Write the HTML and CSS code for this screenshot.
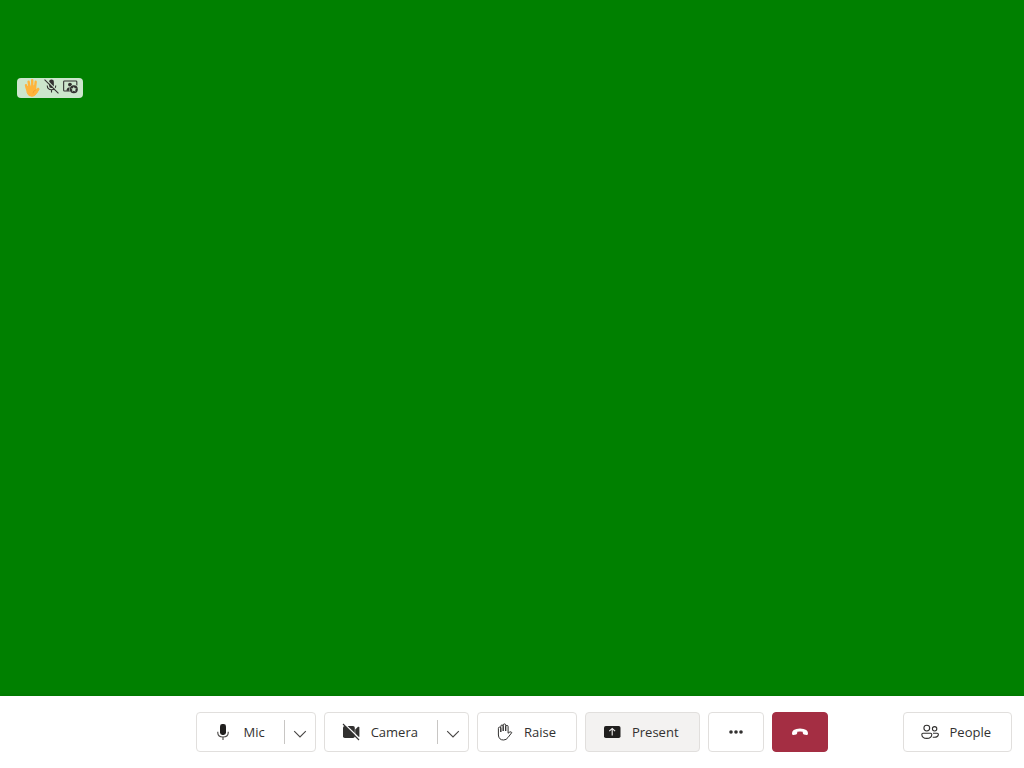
FILE: index.html
```html
<!DOCTYPE html>
<html lang="en">
<head>
<meta charset="utf-8">
<meta name="viewport" content="width=device-width, initial-scale=1">
<title>Call</title>
<link rel="stylesheet" href="styles.css">
</head>
<body>
<div class="call">
  <main class="stage">
    <div class="status" role="group" aria-label="Participant status">
      <svg class="status-hand" viewBox="0 0 16 20" role="img" aria-label="Hand raised">
        <g stroke-linecap="round" stroke-linejoin="round">
          <path d="M3 11 2 7.2M5.6 9.5 4.6 3.6M8.3 9.5 8.2 2.3M11 10 11.7 3.8" fill="none" stroke="#ffb43c" stroke-width="2.4"/>
          <path d="M2.2 9 3.2 14.8Q4.2 18.3 8 18.3Q10.8 18.3 12.6 15.4L15 11.4Q15.2 9.8 13.8 10.2L12 11.8 11.4 8Z" fill="#ffb43c" stroke="#ffb43c"/>
          <path d="M9 15Q9 12.6 11.5 12" fill="none" stroke="#f09a2c" stroke-width=".8"/>
        </g>
      </svg>
      <svg class="status-icon" viewBox="0 0 14 14" role="img" aria-label="Muted">
        <rect x="4.8" y="0.5" width="4.4" height="8" rx="2" fill="#323130"/>
        <path d="M3 6Q3.2 10 7 10T11 6M7 10V12.6" fill="none" stroke="#323130"/>
        <path d="M1.5 0.2 14 12.5" stroke="#cce6cc" stroke-width="1.2"/>
        <path d="M0.5 0.5 13.5 13.5" stroke="#323130"/>
      </svg>
      <svg class="status-icon" viewBox="0 0 14 14" role="img" aria-label="Spotlighted">
        <path d="M6.5 11.2H1.4Q.6 11.2.6 10.4V2.6Q.6 1.8 1.4 1.8H12.1Q12.9 1.8 12.9 2.6V6" fill="none" stroke="#323130"/>
        <circle cx="6.5" cy="5.2" r="1.8" fill="#323130"/>
        <path d="M3.2 11Q3.4 7.8 7 7.8L7.5 11Z" fill="#323130"/>
        <circle cx="10.1" cy="9.6" r="4.2" fill="#cce6cc"/>
        <circle cx="10.1" cy="9.6" r="3.7" fill="#323130"/>
        <path d="m10.1 7.1.8 1.6 1.8.2-1.3 1.2.3 1.8-1.6-.9-1.6.9.3-1.8-1.3-1.2 1.8-.2Z" fill="#cce6cc"/>
      </svg>
    </div>
  </main>
  <footer class="bar">
    <div class="controls">
      <div class="split">
        <button class="split-main" type="button">
          <svg class="icon" viewBox="0 0 20 20" aria-hidden="true">
            <rect x="7" y="2" width="6" height="11" rx="2.4" fill="#201f1e"/>
            <path d="M4.8 9.8V11Q5 15 10 15T15.2 11V9.8M10 15V18" fill="none" stroke="#484644" stroke-width="1.1"/>
          </svg>
          <span>Mic</span>
        </button>
        <button class="split-menu" type="button" aria-label="Microphone options">
          <svg class="chevron" viewBox="0 0 14 14" aria-hidden="true"><path d="m1.2 4.2 5.8 5.8 5.8-5.8" fill="none" stroke="#484644" stroke-width="1.1"/></svg>
        </button>
      </div>
      <div class="split">
        <button class="split-main" type="button">
          <svg class="icon" viewBox="0 0 20 20" aria-hidden="true">
            <rect x="2" y="4" width="11.8" height="12" rx="1.8" fill="#323130"/>
            <path d="M14.2 7.5 17 4.8Q18.4 4.4 18.4 5.5V14.5Q18.4 15.6 17 15.2L14.2 12.5Z" fill="#323130"/>
            <path d="M3 1.6 19 17" stroke="#fff" stroke-width="1.4"/>
            <path d="M2 2 18 18" stroke="#323130" stroke-width="1.1"/>
          </svg>
          <span>Camera</span>
        </button>
        <button class="split-menu" type="button" aria-label="Camera options">
          <svg class="chevron" viewBox="0 0 14 14" aria-hidden="true"><path d="m1.2 4.2 5.8 5.8 5.8-5.8" fill="none" stroke="#484644" stroke-width="1.1"/></svg>
        </button>
      </div>
      <button class="control" type="button">
        <svg class="icon" viewBox="0 0 20 20" aria-hidden="true">
          <path d="M4.4 11V6.3a1.2 1.2 0 0 1 2.4 0V10V4.2a1.2 1.2 0 0 1 2.4 0V9V3.2a1.2 1.2 0 0 1 2.5 0V9V4.6a1.2 1.2 0 0 1 2.4 0V11.2L15.8 10Q17.2 9.4 17.8 10.6L14 15.5Q12.4 18 9.5 18Q4.8 18 4.4 13Z" fill="none" stroke="#323130" stroke-linejoin="round"/>
        </svg>
        <span>Raise</span>
      </button>
      <button class="control control-present" type="button">
        <svg class="icon" viewBox="0 0 20 20" aria-hidden="true">
          <rect x="2" y="4" width="16.5" height="12" rx="1.8" fill="#201f1e"/>
          <path d="M10.2 13.5V6.5M7.3 9.2 10.2 6.4 13.1 9.2" fill="none" stroke="#f3f2f1" stroke-width="1.1"/>
        </svg>
        <span>Present</span>
      </button>
      <button class="control control-icon" type="button" aria-label="More actions">
        <svg class="icon" viewBox="0 0 20 20" aria-hidden="true"><g fill="#323130"><circle cx="5" cy="10" r="1.8"/><circle cx="10" cy="10" r="1.8"/><circle cx="15" cy="10" r="1.8"/></g></svg>
      </button>
      <button class="control control-icon control-leave" type="button" aria-label="Leave call">
        <svg class="icon" viewBox="0 0 20 20" aria-hidden="true"><path d="M2 11.8Q1.7 9.5 3.7 8.1Q6 6.4 10 6.4T16.3 8.1Q18.3 9.5 18 11.8Q17.8 13.2 16.5 13L13.8 12.4Q12.8 12.1 12.8 11.1L12.7 9.8Q10 9.1 7.3 9.8L7.2 11.1Q7.2 12.1 6.2 12.4L3.5 13Q2.2 13.2 2 11.8Z" fill="#fff"/></svg>
      </button>
    </div>
    <div class="side">
      <button class="control" type="button">
        <svg class="icon" viewBox="0 0 20 20" aria-hidden="true">
          <g fill="none" stroke="#323130" stroke-width="1.1">
            <circle cx="6.8" cy="6.1" r="2.9"/><circle cx="14.6" cy="6.8" r="2.2"/>
            <path d="M3 11.3H10.6Q11.8 11.3 11.8 12.5Q11.6 16.4 6.8 16.4T1.8 12.5Q1.8 11.3 3 11.3Z"/>
            <path d="M13 11.3H17.2Q18.4 11.3 18.4 12.4Q18.2 15.3 14.3 15.3H12.7"/>
          </g>
        </svg>
        <span>People</span>
      </button>
    </div>
  </footer>
</div>
</body>
</html>
```
FILE: styles.css
```css
* {
  box-sizing: border-box;
}

body {
  margin: 0;
  font-family: "Open Sans", "Noto Sans", sans-serif;
  font-size: 13px;
  line-height: 20px;
  color: #323130;
}

.call {
  display: flex;
  flex-direction: column;
  min-height: 100vh;
}

.stage {
  flex: 1;
  padding: 78px 17px 17px;
  background: #008000;
}

.status {
  display: inline-flex;
  align-items: center;
  gap: 4px;
  height: 20px;
  padding: 0 5px 0 7px;
  border-radius: 4px;
  background: #cce6cc;
}

.status-hand {
  width: 16px;
  height: 20px;
}

.status-icon {
  width: 15px;
  height: 15px;
  margin-bottom: 3px;
}

.bar {
  display: grid;
  grid-template-columns: 1fr auto 1fr;
  align-items: center;
  padding: 16px 12px;
  background: #fff;
  box-shadow: 0 0 4px rgba(0, 0, 0, 0.14);
}

.controls {
  display: flex;
  grid-column: 2;
  gap: 8px;
}

.side {
  display: flex;
  justify-content: flex-end;
}

button {
  font: inherit;
  color: inherit;
  cursor: pointer;
}

.control,
.split {
  display: flex;
  align-items: center;
  height: 40px;
  border: 1px solid #e1dfdd;
  border-radius: 4px;
  background: #fff;
}

.control {
  gap: 10px;
  padding: 0 20px 0 16px;
}

.split-main,
.split-menu {
  display: flex;
  align-items: center;
  height: 100%;
  border: 0;
  background: none;
}

.split-main {
  gap: 10px;
  padding: 0 19px 0 16px;
}

.split-menu {
  height: 24px;
  padding: 4px 8px 0;
  border-left: 1px solid #c8c6c4;
}

.control-present {
  background: #f3f2f1;
}

.control-icon {
  justify-content: center;
  width: 56px;
  padding: 0;
}

.control-leave {
  border-color: #a42e43;
  background: #a42e43;
}

.icon {
  flex: none;
  width: 20px;
  height: 20px;
}

.chevron {
  width: 14px;
  height: 14px;
}
```
